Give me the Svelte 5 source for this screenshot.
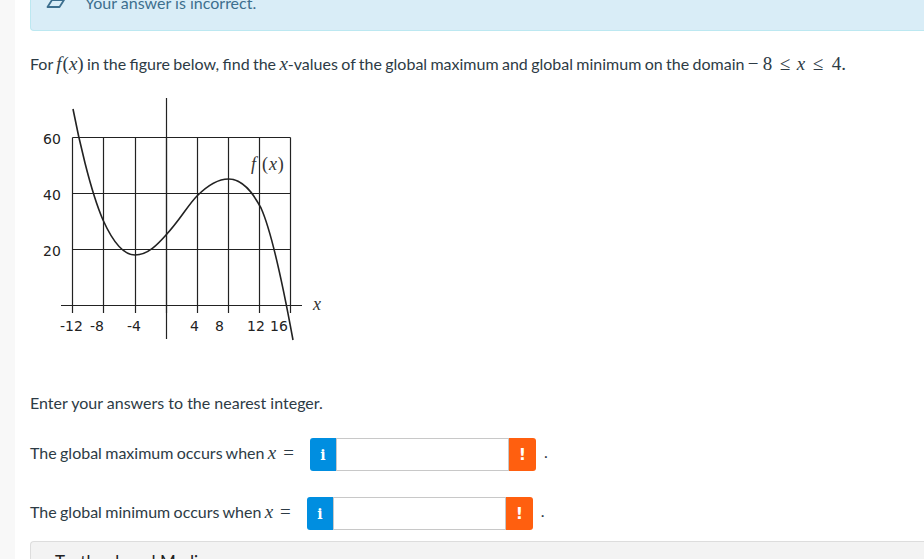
<script>
  const xs = [72.5, 103.5, 135.5, 166.5, 197.5, 228.5, 259.5, 290.5];
  const ys = [137.5, 193.5, 249.5];
  const rows = [
    { label: 'The global maximum occurs when', cls: 'max' },
    { label: 'The global minimum occurs when', cls: 'min' }
  ];
</script>

<div class="page">
  <main class="content">
    <div class="alert">
      <svg class="alert-icon" width="20" height="10" viewBox="0 0 20 10" aria-hidden="true">
        <path d="M1.5 8 L6 1 H18 L13.5 8 Z" fill="none" stroke="#3d6f8e" stroke-width="1.8" stroke-linejoin="round" />
      </svg>
      <span>Your answer is incorrect.</span>
    </div>

    <p class="question">For <span class="m f">f</span><span class="m par">(<i>x</i>)</span> in the figure below, find the <span class="m v">x</span>-values of the global maximum and global minimum on the domain <span class="m dom"><span class="minus">−</span><span class="n8">8</span><span class="le">≤</span><i class="dx">x</i><span class="le">≤</span><span class="n4">4.</span></span></p>

    <svg class="chart" width="320" height="260" viewBox="30 90 320 260">
      <g stroke="#222" stroke-width="1.2" fill="none">
        {#each xs as x}
          <line x1={x} x2={x} y1="137.5" y2="313" />
        {/each}
        {#each ys as y}
          <line x1="72.5" x2="290.5" y1={y} y2={y} />
        {/each}
        <line x1="166.5" x2="166.5" y1="98" y2="339" />
        <line x1="61" x2="302" y1="305.5" y2="305.5" />
        <path stroke-width="1.6" d="M73 109 C78 135 90 190 103 220 C112 240 122 255 135 255 C148 255 158 244 166 235 C180 220 188 205 197 196 C208 185 218 179 228.5 179 C243 179 253 193 261 208 C270 228 282 280 293 340" />
      </g>
      <g class="lbl">
        <text x="43" y="144">60</text>
        <text x="43" y="200">40</text>
        <text x="43" y="256">20</text>
        <text x="60" y="331">-12</text>
        <text x="90" y="331">-8</text>
        <text x="127" y="331">-4</text>
        <text x="190" y="331">4</text>
        <text x="215" y="331">8</text>
        <text x="247" y="331">12</text>
        <text x="270" y="331">16</text>
      </g>
      <text class="fx" x="251" y="170"><tspan font-style="italic">f</tspan> (<tspan font-style="italic">x</tspan>)</text>
      <text class="fx" x="313" y="309.5" font-style="italic">x</text>
    </svg>

    <p class="enter">Enter your answers to the nearest integer.</p>

    {#each rows as row}
      <div class="row {row.cls}">
        <span class="label">{row.label} <span class="m v">x</span><span class="m eq">=</span></span>
        <div class="group">
          <span class="btn info">i</span>
          <span class="input"></span>
          <span class="btn warn">!</span>
        </div>
        <span class="dot">.</span>
      </div>
    {/each}

    <div class="media"><span>Textbook and Media</span></div>
  </main>
</div>

<style>
  :global(body) {
    margin: 0;
    background: #fff;
  }
  .page {
    width: 924px;
    height: 559px;
    overflow: hidden;
    background: #f8f8f8;
    padding-left: 15px;
    box-sizing: border-box;
    font-family: Lato, "Liberation Sans", sans-serif;
    font-size: 16px;
    color: #2d3b45;
  }
  .content {
    background: #fff;
    height: 559px;
    padding-left: 15px;
    box-sizing: border-box;
  }
  .alert {
    display: flex;
    align-items: flex-end;
    height: 31px;
    box-sizing: border-box;
    background: #d9edf7;
    border: 1px solid #bce8f1;
    border-top: 0;
    border-right: 0;
    border-radius: 0 0 0 4px;
    padding: 0 0 18px 15px;
    color: #3d6f8e;
    line-height: 20px;
    margin-right: -2px;
  }
  .alert span {
    margin-left: 19px;
    margin-bottom: -1px;
  }
  .alert-icon {
    margin-bottom: 3px;
  }
  .question {
    margin: 22px 0 0;
    line-height: 22px;
    white-space: nowrap;
    word-spacing: -0.75px;
  }
  .m {
    font-family: "Liberation Serif", serif;
    font-size: 19px;
    word-spacing: 0;
  }
  .f, .v {
    font-style: italic;
  }
  .par {
    margin-left: 1px;
  }
  .dom {
    display: inline-flex;
    align-items: baseline;
  }
  .minus {
    width: 15px;
  }
  .n8 {
    width: 17px;
  }
  .le {
    width: 17px;
  }
  .dx {
    width: 16px;
  }
  .n4 {
    margin-left: 2px;
  }
  .chart {
    display: block;
    margin-top: 15px;
  }
  .lbl text {
    font-family: "DejaVu Sans", sans-serif;
    font-size: 14px;
    fill: #222;
  }
  .fx {
    font-family: "Liberation Serif", serif;
    font-size: 18px;
    letter-spacing: 0.8px;
    fill: #333;
  }
  .enter {
    margin: 42px 0 0;
    line-height: 22px;
  }
  .row {
    display: flex;
    align-items: center;
    height: 33px;
    white-space: nowrap;
    word-spacing: -0.75px;
  }
  .row.max {
    margin-top: 24px;
  }
  .row.min {
    margin-top: 26px;
  }
  .label {
    display: inline-block;
    line-height: 22px;
    padding-bottom: 4px;
  }
  .eq {
    margin-left: 7px;
  }
  .group {
    display: flex;
    height: 33px;
    margin-left: 16px;
  }
  .btn {
    width: 27px;
    display: flex;
    align-items: center;
    justify-content: center;
    color: #fff;
    font-family: "DejaVu Serif", serif;
    font-weight: 700;
    font-size: 14px;
    box-sizing: border-box;
  }
  .info {
    width: 26px;
    background: #008ee0;
    border-radius: 3px 0 0 3px;
  }
  .warn {
    background: #ff5f0f;
    border-radius: 0 3px 3px 0;
    font-family: "DejaVu Sans", sans-serif;
    font-size: 16px;
  }
  .input {
    width: 173px;
    box-sizing: border-box;
    border: 1px solid #c8c8c8;
    background: #fff;
  }
  .dot {
    margin-left: 8px;
    padding-bottom: 6px;
  }
  .media {
    margin-top: 11px;
    height: 60px;
    background: #f3f3f3;
    border: 1px solid #ddd;
    border-right: 0;
    border-radius: 4px 0 0 0;
    box-sizing: border-box;
    padding: 9px 0 0 24px;
    margin-right: -2px;
    font-size: 17px;
    line-height: 22px;
    color: #222;
  }
</style>
